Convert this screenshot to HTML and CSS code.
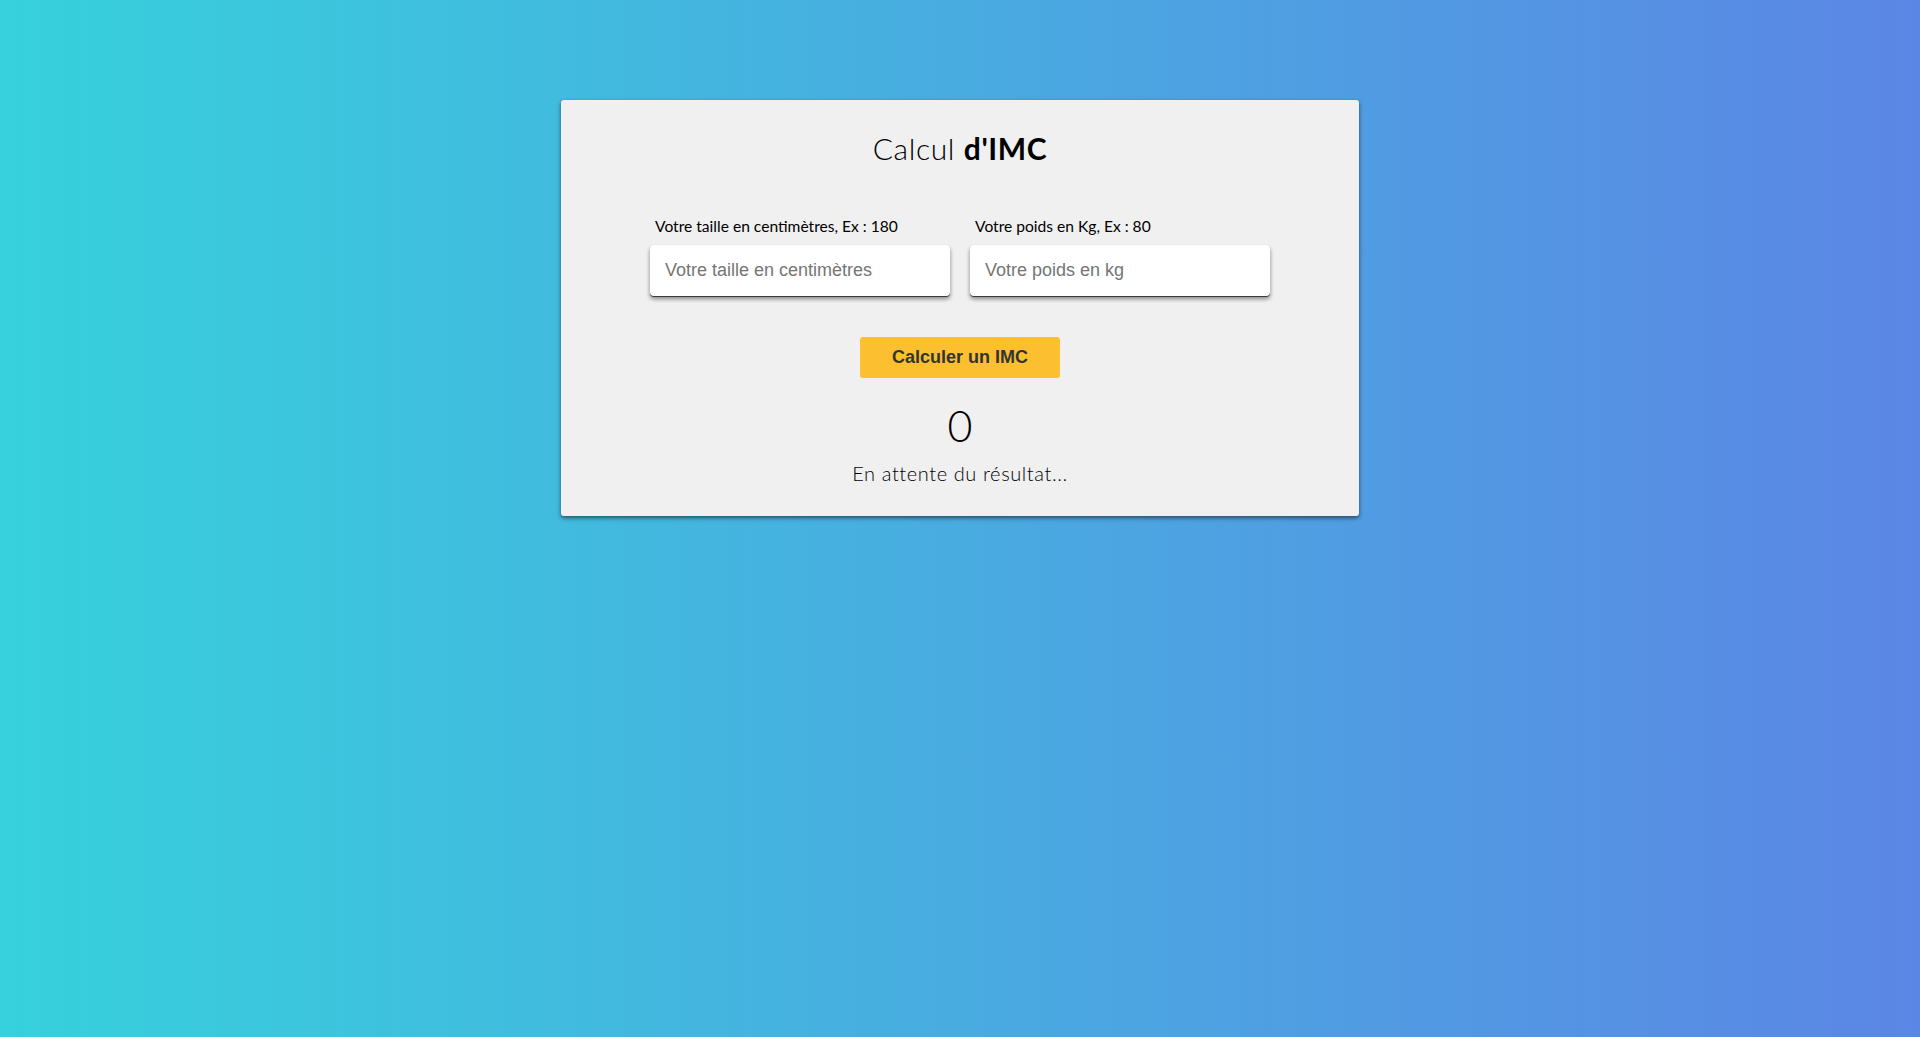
FILE: index.html
```html
<!DOCTYPE html>
<html lang="fr">
<head>
<meta charset="utf-8">
<title>Calcul d'IMC</title>
<link rel="stylesheet" href="styles.css">
</head>
<body>
<main class="card">
  <h1 class="title">Calcul <strong>d'IMC</strong></h1>
  <div class="fields">
    <div class="field">
      <label class="label" for="taille">Votre taille en centimètres, Ex : 180</label>
      <input class="input" id="taille" type="number" placeholder="Votre taille en centimètres">
    </div>
    <div class="field">
      <label class="label" for="poids">Votre poids en Kg, Ex : 80</label>
      <input class="input" id="poids" type="number" placeholder="Votre poids en kg">
    </div>
  </div>
  <button class="btn" type="button">Calculer un IMC</button>
  <div class="value">0</div>
  <p class="result">En attente du résultat...</p>
</main>
</body>
</html>
```
FILE: styles.css
```css
html, body {
  margin: 0;
  padding: 0;
}
body {
  min-height: 1037px;
  background: linear-gradient(to right, #36d1dc, #5b86e5);
  font-family: "Lato", "Liberation Sans", sans-serif;
  padding-top: 100px;
  box-sizing: border-box;
}
.card {
  width: 798px;
  margin: 0 auto;
  background: #f0f0f0;
  border-radius: 3px;
  box-shadow: 0 2px 4px rgba(0, 0, 0, 0.55);
  padding: 30px 0 31px;
  display: flex;
  flex-direction: column;
  align-items: center;
}
.title {
  margin: 0;
  font-size: 30px;
  line-height: 36px;
  font-weight: 300;
  letter-spacing: 0.6px;
  color: #000;
}
.title strong {
  font-weight: 700;
}
.fields {
  display: flex;
  gap: 20px;
  margin-top: 50px;
}
.field {
  display: flex;
  flex-direction: column;
  width: 300px;
}
.label {
  font-size: 15.6px;
  line-height: 20px;
  padding-left: 5px;
  color: #000;
  margin-bottom: 9px;
}
.input {
  box-sizing: border-box;
  width: 300px;
  height: 51px;
  border: none;
  border-radius: 4px;
  background: #fff;
  padding: 0 15px;
  font-family: "Liberation Sans", Arial, sans-serif;
  font-size: 18px;
  box-shadow: 0 3px 4px rgba(0, 0, 0, 0.45), 0 1px 0 rgba(0,0,0,0.6);
  outline: none;
}
.input::placeholder {
  color: #757575;
}
.btn {
  margin-top: 41px;
  width: 200px;
  height: 41px;
  border: none;
  border-radius: 3px;
  background: #fbbf2f;
  color: #333;
  font-family: "Liberation Sans", Arial, sans-serif;
  font-weight: 700;
  font-size: 18px;
  padding: 0;
}
.value {
  margin-top: 23px;
  font-size: 43px;
  line-height: 50px;
  font-weight: 300;
  color: #000;
}
.result {
  margin: 10px 0 0;
  font-size: 20px;
  line-height: 24px;
  font-weight: 300;
  letter-spacing: 0.6px;
  color: #000;
}
```
